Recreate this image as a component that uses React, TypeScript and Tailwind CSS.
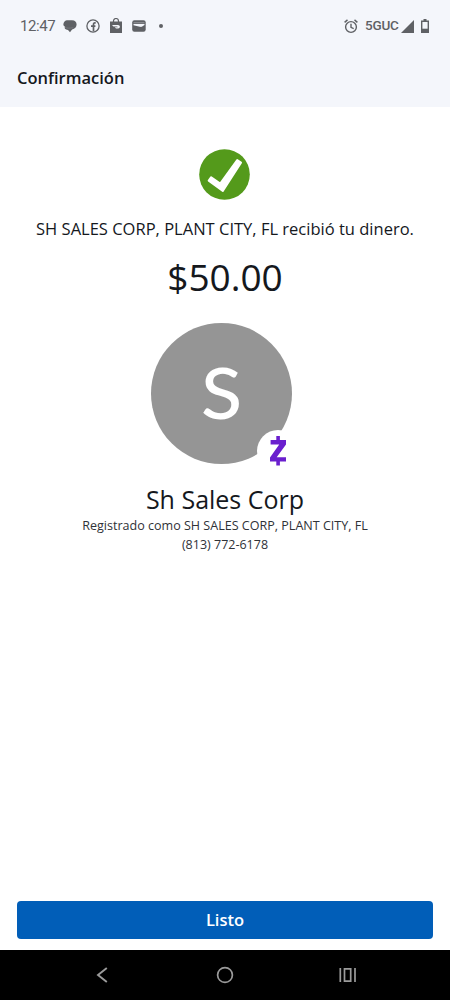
function StatusBar() {
  return (
    <div className="flex h-[52px] items-center pl-5 pr-[21px] text-[#5f6165]">
      <span className="w-[43px] whitespace-nowrap font-['Roboto',sans-serif] text-[15px] leading-none tracking-[-0.4px]">12:47</span>
      <svg className="h-[14px] w-[14px]" viewBox="0 0 14 14" fill="currentColor">
        <path d="M4 1.2h5C12 1.2 13.6 3 13.6 5.6c0 2.7-1.8 4.4-4.5 5L7 13.2 5 11C2 10.6 1 9 2 7.8.3 7 .2 5.8.5 4.6 1 2.5 2.3 1.2 4 1.2Z" />
        <path d="M2 8.2c1.8 1.3 5 1.1 8.3.5" fill="none" stroke="#8b8d92" strokeWidth="0.5" />
      </svg>
      <svg className="ml-[9px] h-[14px] w-[14px]" viewBox="0 0 14 14" fill="none" stroke="currentColor">
        <circle cx="7" cy="7" r="6.1" strokeWidth="1.3" />
        <path d="M9.7 3.9H8.9c-1 0-1.4.5-1.4 1.5v6.8M5 7.2h4.4" strokeWidth="1.7" />
      </svg>
      <svg className="ml-[10px] h-4 w-3" viewBox="0 0 12 16">
        <path d="M3.5 4.2V3a2.5 2.5 0 0 1 5 0v1.2" fill="none" stroke="currentColor" strokeWidth="1.2" />
        <path d="M0 3.5h12V15H0Z" fill="currentColor" />
        <path d="M2 7h5.8c1.6 0 2.5 1.2 1.9 2.4-.4.8-1.2 1.1-2.2 1.1H6L4.8 9.2h3L7.2 8.5H3.4Z" fill="#f4f6fb" />
      </svg>
      <svg className="ml-[10px] h-3 w-[14px]" viewBox="0 0 14 12">
        <rect x="0.2" y="0.3" width="13.5" height="11.4" rx="2.2" fill="currentColor" />
        <path d="M1.5 2.8h11" stroke="#a9abb0" strokeWidth="0.8" />
        <path d="M1.5 4h11v1.1l-2.3 1.5c-.7.4-1.5.4-2.4.2L1.5 5.2Z" fill="#f4f6fb" />
      </svg>
      <span className="ml-[13px] h-1 w-1 rounded-full bg-[#5f6165]" />
      <svg className="ml-auto h-[15px] w-[14px]" viewBox="0 0 14 15" fill="none" stroke="currentColor" strokeWidth="1.4">
        <circle cx="7" cy="8" r="5.4" />
        <path d="M.6 3.4 3.5.9M13.4 3.4 10.5.9M7 4.8v3.6l2.7 1.2" />
      </svg>
      <span className="ml-[7px] w-[33px] whitespace-nowrap font-['Roboto',sans-serif] text-[13.5px] font-medium leading-none tracking-[-0.2px]">5GUC</span>
      <svg className="ml-[3px] h-[13px] w-[13px]" viewBox="0 0 13 13" fill="currentColor">
        <path d="M13 0v13H0Z" />
      </svg>
      <svg className="ml-[7px] h-[14px] w-2" viewBox="0 0 8 14">
        <path d="M2.5 0h3v1.4H8V14H0V1.4h2.5Z" fill="currentColor" />
        <path d="M1.4 3h5.2v6.7H1.4Z" fill="#f4f6fb" />
      </svg>
    </div>
  )
}

function ZelleMark() {
  return (
    <svg className="h-[30px] w-4" viewBox="0 0 16 30" fill="#6a1fce">
      <path d="M6.3 0h3.6v4H16v4.4L6.7 21.200H16v4.400H9.900V29.500H6.300v-3.900H0v-4.200L9.200 8.400H.6V4h5.700Z" />
    </svg>
  )
}

function Avatar() {
  return (
    <div className="relative mr-[7px] mt-[21px] flex h-[141px] w-[141px] items-center justify-center rounded-full bg-[#959595]">
      <span className="scale-x-105 pb-[5px] font-['Lato',sans-serif] text-[72px] font-medium leading-none text-white">S</span>
      <div className="absolute left-[106px] top-[107px] flex h-[42px] w-[42px] items-center justify-center rounded-full bg-white">
        <ZelleMark />
      </div>
    </div>
  )
}

function NavBar() {
  return (
    <nav className="flex h-[50px] items-center justify-between bg-black px-[93px] text-[#9b9b9b]">
      <svg className="h-[18px] w-[18px]" viewBox="0 0 18 18" fill="none" stroke="currentColor" strokeWidth="1.9">
        <path d="M13.8 2 5 9l8.8 7" />
      </svg>
      <svg className="h-[18px] w-[18px]" viewBox="0 0 18 18" fill="none" stroke="currentColor" strokeWidth="1.7">
        <circle cx="9" cy="9" r="7.4" />
      </svg>
      <svg className="h-[18px] w-[18px]" viewBox="0 0 18 18" fill="none" stroke="currentColor" strokeWidth="1.7">
        <path d="M1.3 2v14M16 2v14M5.5 2.8h6.2v12.4H5.5Z" />
      </svg>
    </nav>
  )
}

function App() {
  return (
    <div className="flex h-[1000px] w-[450px] flex-col bg-white font-['Open_Sans',sans-serif] text-[#15181d]">
      <header className="h-[107px] bg-[#f4f6fb]">
        <StatusBar />
        <h1 className="pl-[17px] text-[16.5px] font-semibold leading-[52px]">Confirmación</h1>
      </header>
      <main className="flex flex-1 flex-col items-center pt-[42px]">
        <svg className="mr-px h-[51px] w-[51px]" viewBox="0 0 51 51">
          <circle cx="25.5" cy="25.5" r="25.3" fill="#549a1b" />
          <path d="M9.700 31.600 12.200 28.200 21.200 34.600 38.200 11 42 13.600 23.800 42Z" fill="#fff" stroke="#fff" strokeWidth="2" strokeLinejoin="round" />
        </svg>
        <p className="mt-[17px] whitespace-nowrap text-[16.53px] leading-6">SH SALES CORP, PLANT CITY, FL recibió tu dinero.</p>
        <p className="mt-[11px] text-[37px] leading-[50px]">$50.00</p>
        <Avatar />
        <h2 className="mt-[18px] text-[25px] leading-[34px]">Sh Sales Corp</h2>
        <p className="mt-px whitespace-nowrap text-[12.55px] leading-[18px] text-[#2f3237]">Registrado como SH SALES CORP, PLANT CITY, FL</p>
        <p className="text-[12.5px] leading-5 text-[#2f3237]">(813) 772-6178</p>
      </main>
      <div className="px-[17px] pb-[11px]">
        <button className="block h-[38px] w-full rounded-[4px] bg-[#015eb8] pt-px text-[16.5px] font-semibold text-white">Listo</button>
      </div>
      <NavBar />
    </div>
  )
}

export default App;
